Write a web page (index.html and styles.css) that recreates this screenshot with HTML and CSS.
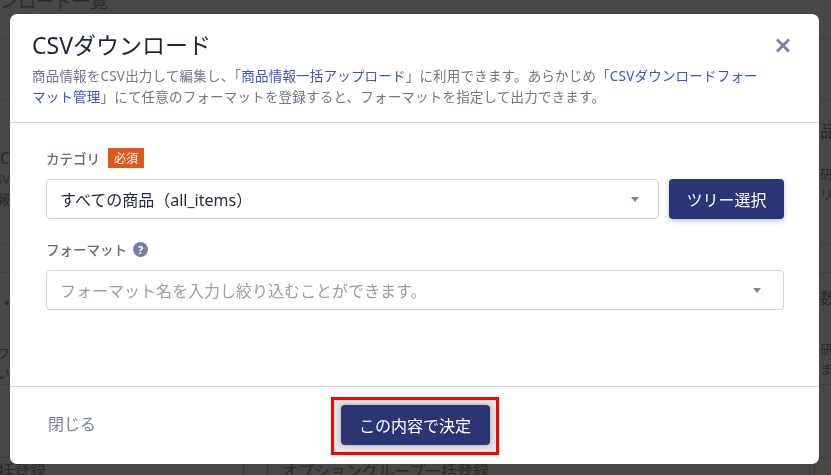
FILE: index.html
```html
<!DOCTYPE html>
<html lang="ja">
<head>
<meta charset="utf-8">
<title>CSVダウンロード</title>
<link rel="stylesheet" href="styles.css">
</head>
<body>
<div class="page">
  <div class="bg-row bg-head"><span class="bg-title">ンロード一覧</span></div>
  <div class="bg-row bg-r1"></div>
  <div class="bg-row bg-r2">
    <div class="bg-left"><span class="bg-big">C</span><span>CSV</span><span>情報</span></div>
    <div class="bg-mid"></div>
    <div class="bg-right"><span class="bg-big">品の</span><span class="bg-gap">研修</span><span>リ</span></div>
  </div>
  <div class="bg-row bg-r3"></div>
  <div class="bg-row bg-r4">
    <div class="bg-left"><span class="bg-dot">•</span><span class="bg-gap2">フ</span><span>とい</span></div>
    <div class="bg-mid"></div>
    <div class="bg-right"><span class="bg-big">数商</span><span class="bg-gap2">研修</span><span>ま、</span></div>
  </div>
  <div class="bg-row bg-r5"></div>
  <div class="bg-foot">
    <div class="bg-foot-a">一括登録</div>
    <div class="bg-foot-b"></div>
    <div class="bg-foot-c">オプショングループ一括登録</div>
    <div class="bg-foot-d"></div>
  </div>
</div>

<div class="overlay">
  <div class="modal">
    <div class="modal-header">
      <div class="title-row">
        <h1 class="modal-title">CSVダウンロード</h1>
        <button class="close" aria-label="閉じる">
          <svg width="16" height="15" viewBox="0 0 16 15"><path d="M2 1.5 L14 13.5 M14 1.5 L2 13.5" stroke="#7a7fa2" stroke-width="2.8" fill="none"/></svg>
        </button>
      </div>
      <p class="modal-desc">商品情報をCSV出力して編集し、「<a class="link">商品情報一括アップロード</a>」に利用できます。あらかじめ「<a class="link">CSVダウンロードフォー<br>マット管理</a>」にて任意のフォーマットを登録すると、フォーマットを指定して出力できます。</p>
    </div>
    <div class="modal-body">
      <div class="field-label">カテゴリ<span class="badge">必須</span></div>
      <div class="select-row">
        <div class="select"><span class="select-value">すべての商品（all_items）</span><span class="caret"></span></div>
        <button class="btn-primary tree-btn">ツリー選択</button>
      </div>
      <div class="field-label field-gap">フォーマット<span class="help">?</span></div>
      <div class="select format-select"><span class="placeholder">フォーマット名を入力し絞り込むことができます。</span><span class="caret"></span></div>
    </div>
    <div class="modal-footer">
      <button class="btn-text">閉じる</button>
      <div class="highlight"><button class="btn-primary submit-btn">この内容で決定</button></div>
      <div></div>
    </div>
  </div>
</div>
</body>
</html>
```
FILE: styles.css
```css
html, body {
  margin: 0;
  padding: 0;
}
body {
  width: 831px;
  height: 475px;
  overflow: hidden;
  font-family: "Noto Sans", "Noto Sans CJK JP", sans-serif;
  background: #474747;
}

/* background page (dimmed) */
.page {
  height: 475px;
  overflow: hidden;
  background: #474747;
  color: #2a2a2a;
  font-size: 13px;
}
.bg-row {
  display: grid;
  grid-template-columns: 10px 1fr 12px;
  border-bottom: 1px solid #3e3e3e;
  overflow: hidden;
}
.bg-head { height: 38px; }
.bg-title {
  grid-column: 1 / 4;
  font-size: 18px;
  line-height: 20px;
  margin-top: -9px;
  color: #2c2c2c;
}
.bg-r1 { height: 60px; }
.bg-r2 { height: 144px; }
.bg-r3 { height: 27px; }
.bg-r4 { height: 111px; }
.bg-r5 { height: 72px; }
.bg-left, .bg-right {
  display: flex;
  flex-direction: column;
  overflow: hidden;
  white-space: nowrap;
  line-height: 20px;
}
.bg-left { align-items: flex-end; }
.bg-right { align-items: flex-start; padding-left: 1px; }
.bg-r2 .bg-left { padding-top: 47px; }
.bg-r2 .bg-right { padding-top: 20px; }
.bg-r4 .bg-left { padding-top: 20px; }
.bg-r4 .bg-right { padding-top: 14px; }
.bg-big { font-size: 16px; line-height: 22px; }
.bg-gap { margin-top: 22px; }
.bg-gap2 { margin-top: 30px; }
.bg-dot { font-size: 16px; }
.bg-foot {
  display: grid;
  grid-template-columns: 244px 24px 547px 1fr;
  height: 20px;
  font-size: 16px;
  line-height: 20px;
  color: #2a2a2a;
}
.bg-foot > div { border-right: 1px solid #3a3a3a; overflow: hidden; white-space: nowrap; }
.bg-foot-a { margin-left: -18px; padding-top: 3px; }
.bg-foot-c { padding-left: 14px; padding-top: 3px; }
.bg-foot-d { border-right: none !important; }

/* modal */
.overlay {
  position: fixed;
  inset: 0;
  padding: 14px 12px 11px 10px;
}
.modal {
  width: 809px;
  height: 450px;
  background: #fff;
  border-radius: 7px;
  display: flex;
  flex-direction: column;
  overflow: hidden;
}
.modal-header {
  padding: 16px 22px 14px 22px;
  border-bottom: 1px solid #d0d7e6;
}
.title-row {
  display: flex;
  align-items: center;
  justify-content: space-between;
  height: 30px;
}
.modal-title {
  margin: 0;
  font-size: 23px;
  line-height: 30px;
  font-weight: 400;
  color: #1f2342;
}
.close {
  width: 24px;
  height: 24px;
  padding: 0;
  margin-right: 2px;
  border: none;
  background: none;
  display: flex;
  align-items: center;
  justify-content: center;
  cursor: pointer;
}
.modal-desc {
  margin: 6px 0 0;
  font-size: 13.5px;
  letter-spacing: 0.2px;
  line-height: 21px;
  color: #727586;
  white-space: nowrap;
}
.link {
  color: #3f52c6;
  text-decoration: none;
}

.modal-body {
  flex: 1;
  padding: 25px 35px 0 36px;
}
.field-label {
  display: flex;
  align-items: center;
  gap: 8px;
  height: 20px;
  font-size: 13.5px;
  font-weight: 500;
  color: #676a7e;
  margin-bottom: 11px;
}
.field-gap { margin-top: 20px; gap: 6px; }
.badge {
  display: inline-flex;
  align-items: center;
  justify-content: center;
  width: 36px;
  height: 20px;
  background: #e0591c;
  color: #fff;
  font-size: 12px;
  font-weight: 400;
}
.help {
  display: inline-flex;
  align-items: center;
  justify-content: center;
  width: 15px;
  height: 15px;
  border-radius: 50%;
  background: #7a7fa2;
  color: #fff;
  font-size: 11px;
  font-weight: 700;
  line-height: 1;
}
.select-row {
  display: flex;
  gap: 10px;
}
.select {
  flex: 1;
  box-sizing: border-box;
  height: 40px;
  border: 1px solid #cdd2e3;
  border-radius: 4px;
  display: flex;
  align-items: center;
  padding: 0 19px 0 13px;
}
.format-select { padding-right: 22px; }
.select-value {
  font-size: 16px;
  color: #272a44;
}
.placeholder {
  font-size: 16px;
  color: #9a9dab;
}
.caret {
  margin-left: auto;
  width: 0;
  height: 0;
  border-left: 4.5px solid transparent;
  border-right: 4.5px solid transparent;
  border-top: 5px solid #7a7fa2;
}
.btn-primary {
  background: #2b3575;
  color: #fff;
  border: none;
  border-radius: 4px;
  height: 40px;
  font-family: inherit;
  font-size: 16px;
  cursor: pointer;
}
.tree-btn {
  width: 115px;
  box-shadow: 0 2px 5px rgba(43, 53, 117, 0.3);
}

.modal-footer {
  height: 77px;
  border-top: 1px solid #d0d7e6;
  display: grid;
  grid-template-columns: 1fr auto 1fr;
  align-items: center;
  padding: 0 38px;
}
.btn-text {
  justify-self: start;
  border: none;
  background: none;
  padding: 0 0 5px;
  font-family: inherit;
  font-size: 16px;
  color: #7c82a0;
  cursor: pointer;
}
.highlight {
  border: 3px solid #ff0000;
  padding: 5px 6px 7px 7px;
  background: #e3e3e3;
  display: flex;
  margin-top: 1px;
}
.submit-btn {
  width: 149px;
  box-shadow: 0 0 4px rgba(0, 0, 0, 0.3);
}
```
